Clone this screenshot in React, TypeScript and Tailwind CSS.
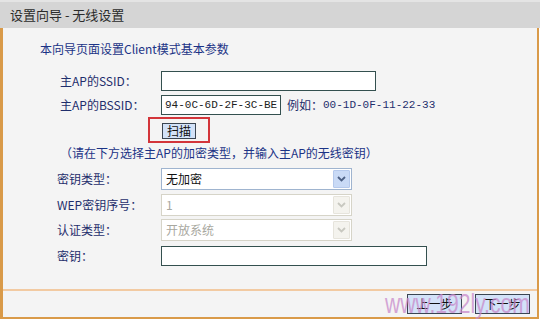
import React from "react";

const cjk = { fontFamily: '"Noto Sans CJK SC", "Liberation Sans", sans-serif' };
const mono = { fontFamily: '"Liberation Mono", "Noto Sans CJK SC", monospace' };

function Chevron({ color }: { color: string }) {
  return (
    <svg width="9" height="6" viewBox="0 0 9 6">
      <path d="M1 1 L4.5 4.5 L8 1" fill="none" stroke={color} strokeWidth="1.8" />
    </svg>
  );
}

function Select({ value, disabled }: { value: string; disabled?: boolean }) {
  return (
    <div
      className={
        "w-[191px] h-[22px] bg-white flex items-center border " +
        (disabled ? "border-[#d6d4c8]" : "border-[#9fb4cf]")
      }
    >
      <div
        className={
          "flex-1 pl-[4px] text-[12px] leading-[20px] " + (disabled ? "text-[#a8a8a0]" : "text-[#111]")
        }
        style={cjk}
      >
        {value}
      </div>
      <div
        className={
          "w-[17px] h-[18px] mr-[1px] flex items-center justify-center rounded-[1px] " +
          (disabled ? "bg-[#f4f3ee] border border-[#e6e4dc]" : "bg-[#c9daf6] border border-[#b5c9ec]")
        }
      >
        <Chevron color={disabled ? "#c8c8c0" : "#4d6185"} />
      </div>
    </div>
  );
}

function Label({ children }: { children: React.ReactNode }) {
  return (
    <div className="w-[101px] shrink-0 text-[12px] leading-[16px] text-[#1f2e6c]" style={cjk}>
      {children}
    </div>
  );
}

function Btn({ children, w, h }: { children: React.ReactNode; w: string; h: string }) {
  return (
    <div
      className={
        w +
        " " +
        h +
        " bg-[#d3e2f8] border border-[#3a4552] flex items-center justify-center text-[12px] text-[#111] leading-none"
      }
      style={cjk}
    >
      {children}
    </div>
  );
}

export default function App() {
  return (
    <div className="w-[540px] h-[321px] bg-white relative overflow-hidden">
      <div
        className="h-[28px] bg-[#d5d5d5] border-t-2 border-[#e4e4e4] pl-[10px] flex items-center text-[13px] text-[#2b2b2b]"
        style={cjk}
      >
        设置向导 - 无线设置
      </div>
      <div className="w-[539px] h-[291px] border-l-[3px] border-r-[2px] border-b-[2px] border-[#d99a49] bg-[#f4f4f4] flex flex-col">
        <div className="flex-1 flex flex-col">
          <div className="mt-[13px] ml-[37px] h-[16px] text-[12px] leading-[16px] text-[#1b3386]" style={cjk}>
            本向导页面设置Client模式基本参数
          </div>
          <div className="mt-[14px] ml-[57px] flex items-center h-[20px]">
            <Label>主AP的SSID：</Label>
            <div className="w-[215px] h-[20px] bg-white border border-[#34504f]" />
          </div>
          <div className="mt-[4px] ml-[57px] flex items-center h-[20px]">
            <Label>主AP的BSSID：</Label>
            <div
              className="w-[120px] h-[20px] bg-white border border-[#34504f] pl-[3px] text-[11px] leading-[18px] text-[#222]"
              style={mono}
            >
              94-0C-6D-2F-3C-BE
            </div>
            <div className="ml-[6px] text-[12px] leading-[16px] text-[#1f2e6c] flex items-center" style={cjk}>
              例如：<span className="text-[11px]" style={mono}>00-1D-0F-11-22-33</span>
            </div>
          </div>
          <div className="mt-[2px] ml-[145px] w-[62px] h-[26px] border-2 border-[#d3353a] pl-[12px] pt-[4px]">
            <Btn w="w-[34px]" h="h-[16px]">扫描</Btn>
          </div>
          <div className="mt-[2px] ml-[57px] h-[16px] text-[12px] leading-[16px] text-[#1b3386]" style={cjk}>
            （请在下方选择主AP的加密类型，并输入主AP的无线密钥）
          </div>
          <div className="mt-[7px] ml-[54px] flex items-center">
            <div className="w-[104px] shrink-0"><Label>密钥类型：</Label></div>
            <Select value="无加密" />
          </div>
          <div className="mt-[4px] ml-[54px] flex items-center">
            <div className="w-[104px] shrink-0"><Label>WEP密钥序号：</Label></div>
            <Select value="1" disabled />
          </div>
          <div className="mt-[3px] ml-[54px] flex items-center">
            <div className="w-[104px] shrink-0"><Label>认证类型：</Label></div>
            <Select value="开放系统" disabled />
          </div>
          <div className="mt-[5px] ml-[54px] flex items-center">
            <div className="w-[104px] shrink-0"><Label>密钥：</Label></div>
            <div className="w-[266px] h-[20px] bg-white border border-[#34504f]" />
          </div>
        </div>
        <div className="h-[2px] bg-[#f2caa2]" />
        <div className="h-[26px] flex justify-end items-start pt-[3px] pr-[7px] gap-[13px]">
          <Btn w="w-[55px]" h="h-[20px]">上一步</Btn>
          <Btn w="w-[55px]" h="h-[20px]">下一步</Btn>
        </div>
      </div>
      <div
        className="absolute left-[385px] top-[289px] text-[27px] leading-[30px] text-[#c88acb] opacity-75 pointer-events-none origin-left scale-x-[0.78] whitespace-nowrap"
        style={{ fontFamily: '"Liberation Sans", Arial, sans-serif' }}
      >
        www.192ly.com
      </div>
    </div>
  );
}
